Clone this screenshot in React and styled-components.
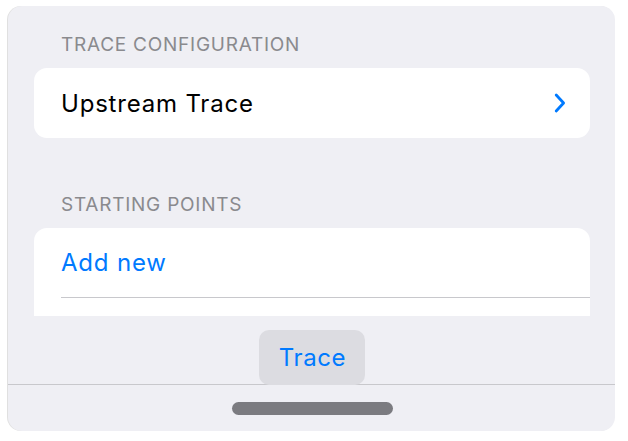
import styled, { createGlobalStyle } from 'styled-components';

const GlobalStyle = createGlobalStyle`
  html, body {
    margin: 0;
    padding: 0;
    background: #ffffff;
  }
  body {
    font-family: Inter, "Liberation Sans", sans-serif;
    -webkit-font-smoothing: antialiased;
  }
`;

const Sheet = styled.div`
  box-sizing: border-box;
  width: 607px;
  height: 425px;
  margin: 6px 0 0 8px;
  border-radius: 14px;
  background: #efeff4;
  box-shadow: -1px 0 0 rgba(0, 0, 0, 0.12);
  overflow: hidden;
  display: flex;
  flex-direction: column;
`;

const Scroll = styled.div`
  height: 310px;
  overflow: hidden;
  padding: 0 25px 0 26px;
`;

const SectionHeader = styled.div`
  padding: 0 0 0 27px;
  height: ${(p) => p.$height}px;
  display: flex;
  align-items: flex-end;
  padding-bottom: 12px;
  box-sizing: border-box;
  font-size: 19px;
  color: #8a8a8e;
  letter-spacing: 0.75px;
  text-transform: uppercase;
`;

const Card = styled.div`
  background: #ffffff;
  border-radius: 13px;
  overflow: hidden;
`;

const Row = styled.div`
  height: 70px;
  padding: 0 0 0 27px;
  display: flex;
  align-items: center;
`;

const RowInner = styled.div`
  flex: 1;
  align-self: stretch;
  display: flex;
  align-items: center;
  justify-content: space-between;
  padding-right: 24px;
  border-bottom: ${(p) => (p.$divider ? '1px solid #c8c8cc' : 'none')};
`;

const Label = styled.span`
  font-size: 24px;
  letter-spacing: 0.8px;
  color: ${(p) => (p.$link ? '#007aff' : '#000000')};
`;

const Toolbar = styled.div`
  height: 68px;
  display: flex;
  justify-content: center;
  align-items: flex-end;
  border-bottom: 1px solid #c8c8cc;
`;

const TraceButton = styled.button`
  width: 106px;
  height: 55px;
  margin-bottom: -1px;
  border: none;
  border-radius: 10px;
  background: #dcdce1;
  color: #007aff;
  font-family: inherit;
  font-size: 24px;
  letter-spacing: 0.6px;
  padding: 0 0 0 2px;
`;

const HomeArea = styled.div`
  flex: 1;
  display: flex;
  justify-content: center;
  padding: 17px 0 0 1px;
`;

const HomeIndicator = styled.div`
  width: 161px;
  height: 13px;
  border-radius: 7px;
  background: #7b7b80;
`;

function Chevron() {
  return (
    <svg width="12" height="20" viewBox="0 0 12 20" fill="none">
      <path d="M2.2 2 L9.6 10 L2.2 18" stroke="#007aff" strokeWidth="2.8" strokeLinecap="round" strokeLinejoin="round" />
    </svg>
  );
}

export default function App() {
  return (
    <>
      <GlobalStyle />
      <Sheet>
        <Scroll>
          <SectionHeader $height={62}>Trace Configuration</SectionHeader>
          <Card>
            <Row>
              <RowInner>
                <Label>Upstream Trace</Label>
                <Chevron />
              </RowInner>
            </Row>
          </Card>
          <SectionHeader $height={90}>Starting Points</SectionHeader>
          <Card>
            <Row>
              <RowInner $divider>
                <Label $link>Add new</Label>
              </RowInner>
            </Row>
            <Row />
          </Card>
        </Scroll>
        <Toolbar>
          <TraceButton>Trace</TraceButton>
        </Toolbar>
        <HomeArea>
          <HomeIndicator />
        </HomeArea>
      </Sheet>
    </>
  );
}
